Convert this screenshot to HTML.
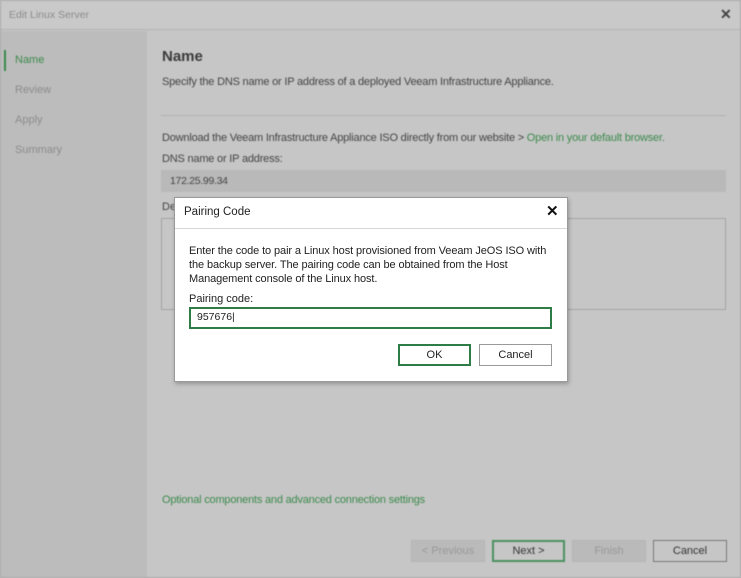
<!DOCTYPE html>
<html><head><style>
*{margin:0;padding:0;box-sizing:border-box}
body{width:741px;height:578px;overflow:hidden;background:#c6c6c6;font-family:"Liberation Sans",sans-serif;font-size:11px;color:#444;position:relative}
.a{position:absolute;white-space:nowrap}
.bl{filter:blur(0.5px)}
.btn{position:absolute;height:22px;border:1px solid #8a8a8a;text-align:center;line-height:20px;font-size:11px}
</style></head><body>
<div class="bl">
<div class="a" style="left:0;top:0;width:741px;height:578px;border:1px solid #a8a8a8"></div>
<div class="a" style="left:1px;top:1px;width:739px;height:29px;background:#c9c9c9;border-bottom:1px solid #b3b3b3"></div>
<div class="a" style="left:9px;top:9px;color:#8c8c8c;font-size:10.5px">Edit Linux Server</div>
<div class="a" style="left:720px;top:6px;color:#444;font-size:14px;font-weight:bold">✕</div>
<div class="a" style="left:1px;top:31px;width:146px;height:546px;background:#bcbcbc"></div>
<div class="a" style="left:4px;top:50px;width:2px;height:21px;background:#3a8a4a"></div>
<div class="a" style="left:15px;top:54px;color:#3c8a4c">Name</div>
<div class="a" style="left:15px;top:84px;color:#8c8c8c">Review</div>
<div class="a" style="left:15px;top:114px;color:#8c8c8c">Apply</div>
<div class="a" style="left:15px;top:144px;color:#8c8c8c">Summary</div>
<div class="a" style="left:162px;top:48px;font-size:15px;font-weight:bold;color:#3a3a3a">Name</div>
<div class="a" style="left:162px;top:76px;letter-spacing:-0.2px">Specify the DNS name or IP address of a deployed Veeam Infrastructure Appliance.</div>
<div class="a" style="left:161px;top:115px;width:565px;height:1px;background:#b0b0b0"></div>
<div class="a" style="left:162px;top:132px;letter-spacing:-0.2px">Download the Veeam Infrastructure Appliance ISO directly from our website &gt; <span style="color:#3c8a4c">Open in your default browser.</span></div>
<div class="a" style="left:162px;top:153px;letter-spacing:-0.2px">DNS name or IP address:</div>
<div class="a" style="left:161px;top:170px;width:565px;height:22px;background:#b9b9b9"></div>
<div class="a" style="left:170px;top:175px;font-size:10.5px;letter-spacing:-0.3px">172.25.99.34</div>
<div class="a" style="left:162px;top:201px">De</div>
<div class="a" style="left:161px;top:218px;width:565px;height:92px;border:1px solid #a5a5a5"></div>
<div class="a" style="left:162px;top:494px;color:#3c8a4c;letter-spacing:-0.2px">Optional components and advanced connection settings</div>
<div class="btn" style="left:411px;top:540px;width:74px;background:#bababa;border-color:#b5b5b5;color:#999">&lt; Previous</div>
<div class="btn" style="left:492px;top:540px;width:73px;border:2px solid #4a9060;line-height:18px;color:#333">Next &gt;</div>
<div class="btn" style="left:572px;top:540px;width:74px;background:#bababa;border-color:#b5b5b5;color:#999">Finish</div>
<div class="btn" style="left:653px;top:540px;width:74px;border-color:#7a7a7a;color:#333">Cancel</div>
</div>
<div class="a" style="left:174px;top:197px;width:394px;height:185px;background:#fff;border:1px solid #9a9a9a;box-shadow:1px 2px 4px rgba(0,0,0,.25)">
<div class="a" style="left:9px;top:8px;color:#222;font-size:11.5px">Pairing Code</div>
<div class="a" style="left:371px;top:4px;color:#111;font-size:15px;font-weight:bold">✕</div>
<div class="a" style="left:0;top:30px;width:392px;height:1px;background:#d8d8d8"></div>
<div class="a" style="left:14px;top:46px;color:#222;font-size:11px;line-height:14px;white-space:normal;width:370px;letter-spacing:-0.1px">Enter the code to pair a Linux host provisioned from Veeam JeOS ISO with<br>the backup server. The pairing code can be obtained from the Host<br>Management console of the Linux host.</div>
<div class="a" style="left:14px;top:95px;color:#222">Pairing code:</div>
<div class="a" style="left:14px;top:109px;width:363px;height:22px;border:2px solid #2f7d46"></div>
<div class="a" style="left:22px;top:113px;color:#222;font-size:10.5px">957676|</div>
<div class="btn" style="left:223px;top:146px;width:73px;border:2px solid #2f7d46;line-height:18px;color:#222">OK</div>
<div class="btn" style="left:304px;top:146px;width:73px;border-color:#999;color:#222">Cancel</div>
</div>
</body></html>
